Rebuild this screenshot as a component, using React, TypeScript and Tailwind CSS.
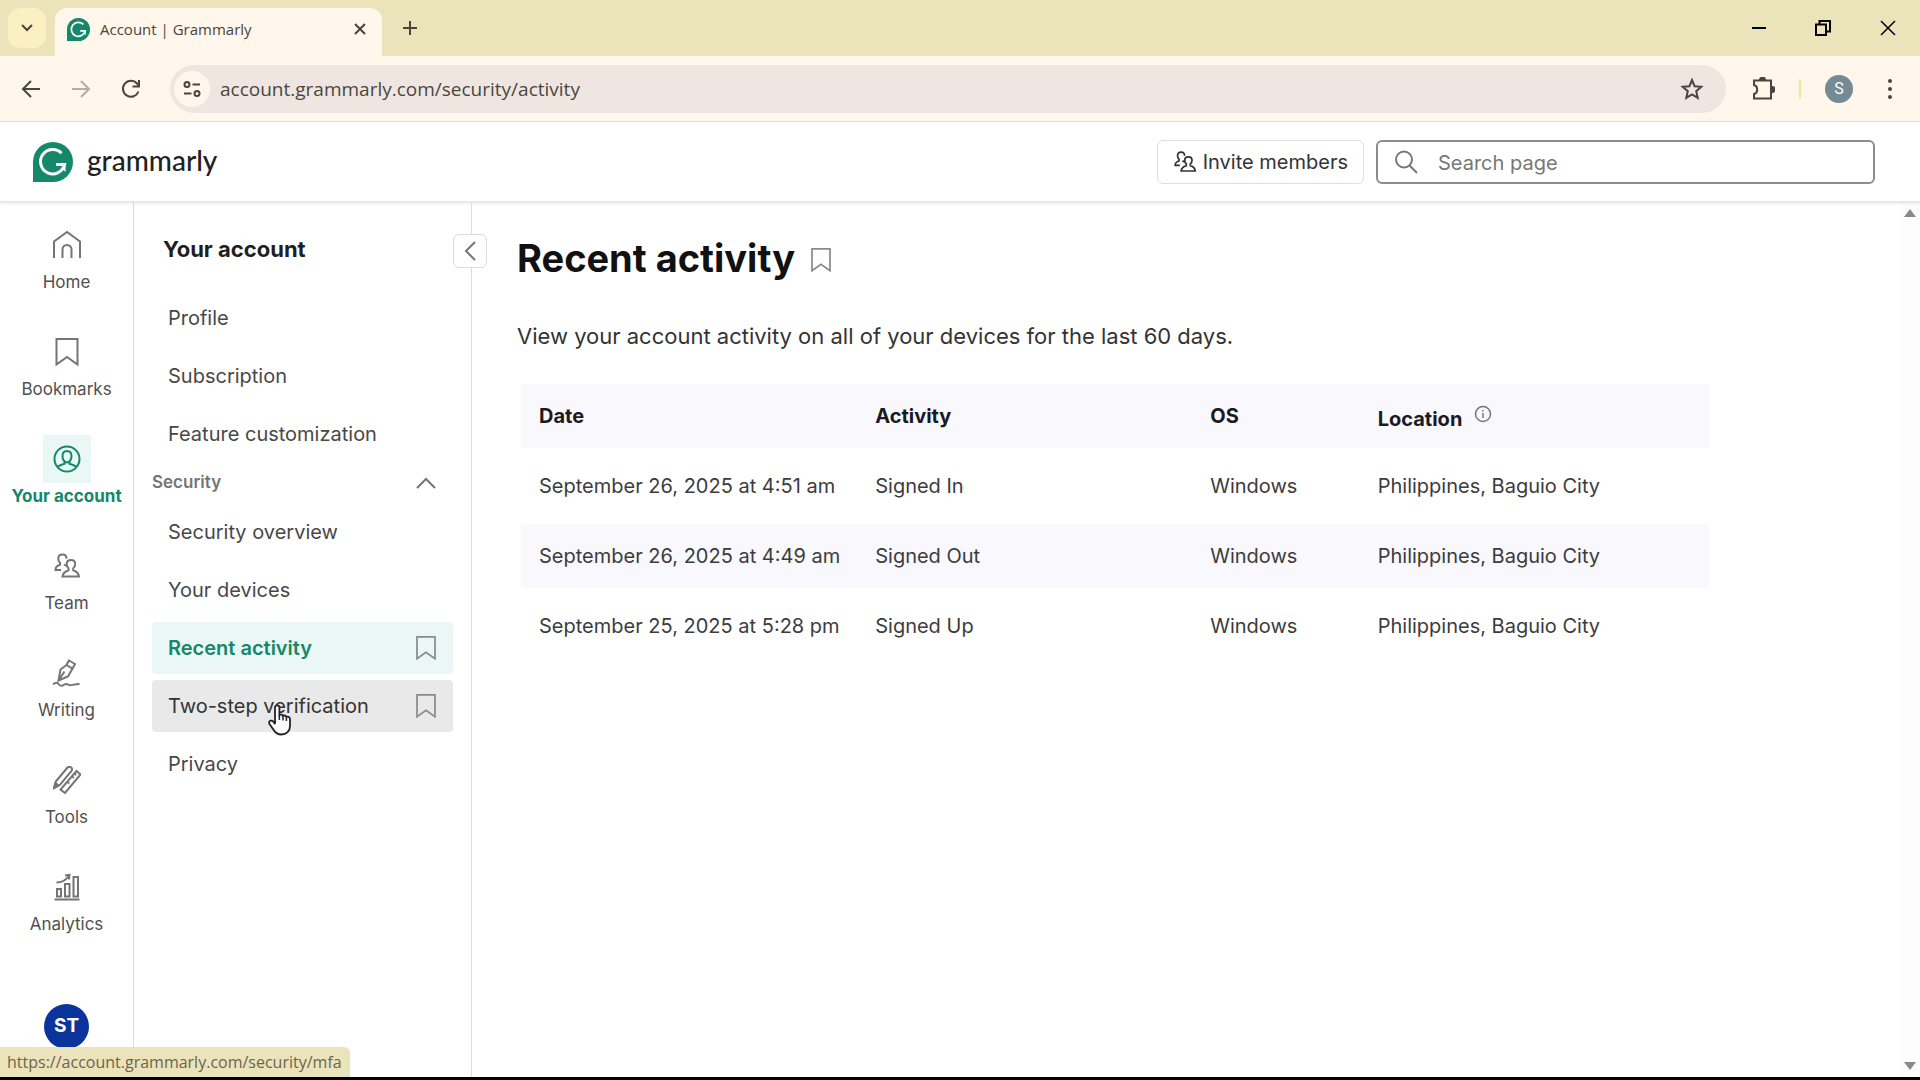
import * as React from "react";

interface IconProps {
  className?: string;
}

interface RailItem {
  id: number;
  text: string;
  icon: React.FC<IconProps>;
  active?: boolean;
}

interface MenuItem {
  id: number;
  text: string;
  state?: "active" | "hovered";
}

interface ActivityRow {
  id: number;
  date: string;
  activity: string;
  os: string;
  location: string;
}

const Svg: React.FC<{
  box?: string;
  width?: number;
  className?: string;
  children: React.ReactNode;
}> = ({ box = "0 0 28 28", width = 2, className, children }) => (
  <svg
    viewBox={box}
    fill="none"
    stroke="currentColor"
    strokeWidth={width}
    className={className}
    aria-hidden="true"
  >
    {children}
  </svg>
);

const LogoMark: React.FC<IconProps> = ({ className }) => (
  <svg viewBox="0 0 40 40" className={className} aria-hidden="true">
    <path d="M20 0a20 20 0 0 1 0 40H0V20A20 20 0 0 1 20 0z" fill="#15876a" />
    <path
      d="M28.500 11.200A12.200 12.200 0 1 0 31.600 22.400H23"
      fill="none"
      stroke="#fff"
      strokeWidth="3"
    />
    <path d="M32.500 21v9l-3.500-3.500z" fill="#fff" />
  </svg>
);

const HomeIcon: React.FC<IconProps> = ({ className }) => (
  <Svg className={className}>
    <path d="M1 27V10.500L14 1l13 9.500V27M9.500 27v-8.500a4.500 4.500 0 0 1 9 0V27" />
  </Svg>
);

const BookmarkIcon: React.FC<IconProps> = ({ className }) => (
  <Svg className={className}>
    <path d="M3.500 1h21v25.500L14 19 3.500 26.500z" />
  </Svg>
);

const AccountIcon: React.FC<IconProps> = ({ className }) => (
  <Svg className={className}>
    <circle cx="14" cy="14" r="12.5" />
    <path d="M14 6c3 0 4.500 2.200 4.500 5.200 0 3.500-2 6.300-4.500 6.300s-4.500-2.800-4.500-6.300C9.500 8.200 11 6 14 6z" />
    <path d="M4.500 22c1.500-1.800 4-2.300 7-3.300v-2M23.500 22c-1.500-1.800-4-2.300-7-3.300v-2" />
  </Svg>
);

const TeamIcon: React.FC<IconProps> = ({ className }) => (
  <Svg className={className}>
    <path d="M8 18H2.500c0-3.500 2-4.500 4.500-5.200v-2C5.800 9.800 5.300 8.500 5.300 6.800 5.300 4.300 7 2.500 9.500 2.500s4 1.800 4 4.300" />
    <path d="M18 8c2.700 0 4.200 1.700 4.200 4 0 1.800-.7 3.200-2 4.200v2c3 1 5.300 2 5.800 6.300H9.500c.5-4.300 3-5.300 6-6.300v-2c-1.200-1-1.800-2.400-1.800-4.200 0-2.300 1.600-4 4.300-4z" />
    <path d="M11 12.500l2.500 1.500" />
  </Svg>
);

const WritingIcon: React.FC<IconProps> = ({ className }) => (
  <Svg className={className}>
    <path d="M17 1.500l6 3.500-2.500 4.500-6-3.500zM14.500 6L8.500 10.500 6.500 21.500l9.500-4 4.500-8M6.500 21.500l6-9" />
    <path d="M1 25.500c3-2.500 4.500-2 6 0s3.500 1.500 5.500 0 4 .8 6 .8 3.500-1.300 9-1.300" />
  </Svg>
);

const ToolsIcon: React.FC<IconProps> = ({ className }) => (
  <Svg className={className}>
    <path d="M1 22l1.800-6.500L14.500 1.500c1-1.200 2.300-1 3.500-.2s1.500 2.200.5 3.500L7 18.800z" />
    <path d="M1 22l1.500-5 3 2.500z" fill="currentColor" />
    <path d="M23.500 5l4 3.500L12 27l-4.500-3.500z" />
    <path d="M19 10.500l1.800 1.500M14.500 16l1.800 1.500M21.500 7.500l1.800 1.500" />
  </Svg>
);

const AnalyticsIcon: React.FC<IconProps> = ({ className }) => (
  <Svg className={className}>
    <path d="M1.500 26.500h25M4 16h4v7.500H4zM12 11h4.500v12.500H12zM20.500 4H25v19.500h-4.500z" />
    <path d="M3.500 9.500c5 0 9-2 12-6M12 2.500l4.500-.5-.5 4.500" />
  </Svg>
);

const railItems: RailItem[] = [
  { id: 1, text: "Home", icon: HomeIcon },
  { id: 2, text: "Bookmarks", icon: BookmarkIcon },
  { id: 3, text: "Your account", icon: AccountIcon, active: true },
  { id: 4, text: "Team", icon: TeamIcon },
  { id: 5, text: "Writing", icon: WritingIcon },
  { id: 6, text: "Tools", icon: ToolsIcon },
  { id: 7, text: "Analytics", icon: AnalyticsIcon },
];

const accountMenu: MenuItem[] = [
  { id: 1, text: "Profile" },
  { id: 2, text: "Subscription" },
  { id: 3, text: "Feature customization" },
];

const securityMenu: MenuItem[] = [
  { id: 1, text: "Security overview" },
  { id: 2, text: "Your devices" },
  { id: 3, text: "Recent activity", state: "active" },
  { id: 4, text: "Two-step verification", state: "hovered" },
  { id: 5, text: "Privacy" },
];

const activityRows: ActivityRow[] = [
  {
    id: 1,
    date: "September 26, 2025 at 4:51 am",
    activity: "Signed In",
    os: "Windows",
    location: "Philippines, Baguio City",
  },
  {
    id: 2,
    date: "September 26, 2025 at 4:49 am",
    activity: "Signed Out",
    os: "Windows",
    location: "Philippines, Baguio City",
  },
  {
    id: 3,
    date: "September 25, 2025 at 5:28 pm",
    activity: "Signed Up",
    os: "Windows",
    location: "Philippines, Baguio City",
  },
];

const TabStrip = () => {
  return (
    <div className="flex h-14 items-end bg-[#ebe3ba] text-[#4a4536]">
      <button
        aria-label="Search tabs"
        className="mb-2 ml-2 flex h-10 w-[38px] items-center justify-center rounded-xl bg-[#fbf0c2]"
      >
        <Svg box="0 0 12 8" className="h-2 w-3">
          <path d="M1 1l5 5 5-5" />
        </Svg>
      </button>
      <div className="ml-[9px] flex h-12 w-[327px] items-center rounded-t-xl bg-[#fff7ec] px-3 pb-1.5">
        <LogoMark className="h-[23px] w-[23px]" />
        <span className="ml-2.5 flex-1 text-[15px]">Account | Grammarly</span>
        <button aria-label="Close tab" className="p-1">
          <Svg box="0 0 12 12" className="h-3 w-3">
            <path d="M1 1l10 10M11 1L1 11" />
          </Svg>
        </button>
      </div>
      <button aria-label="New tab" className="mb-4 ml-4 p-1">
        <Svg box="0 0 16 16" className="h-4 w-4">
          <path d="M8 1v14M1 8h14" />
        </Svg>
      </button>
      <div className="mb-5 ml-auto mr-6 flex items-center gap-[49px] text-black">
        <button aria-label="Minimize">
          <Svg box="0 0 14 14" className="h-3.5 w-3.5">
            <path d="M0 7h14" />
          </Svg>
        </button>
        <button aria-label="Restore">
          <Svg box="0 0 16 16" className="h-4 w-4">
            <path d="M1 4.500h10V15H1zM4.500 4V1H15v10.500h-3.500" />
          </Svg>
        </button>
        <button aria-label="Close">
          <Svg box="0 0 16 16" width={1.5} className="h-4 w-4">
            <path d="M1 1l14 14M15 1L1 15" />
          </Svg>
        </button>
      </div>
    </div>
  );
};

const Toolbar = () => {
  return (
    <div className="flex h-[66px] items-center border-b border-[#e6e0dc] bg-[#fff7ec] text-[#4a463f]">
      <button aria-label="Back" className="ml-[21px]">
        <Svg box="0 0 20 20" className="h-5 w-5">
          <path d="M19 10H2M10 2l-8 8 8 8" />
        </Svg>
      </button>
      <button aria-label="Forward" className="ml-[30px] text-[#b3ada3]">
        <Svg box="0 0 20 20" className="h-5 w-5">
          <path d="M1 10h17M10 2l8 8-8 8" />
        </Svg>
      </button>
      <button aria-label="Reload" className="ml-[30px]">
        <Svg box="0 0 20 20" className="h-5 w-5">
          <path d="M17.500 12.500A8 8 0 1 1 16 4.500l2 2.500M18 1v6.500h-6.500" />
        </Svg>
      </button>
      <div className="ml-[29px] flex h-12 flex-1 items-center rounded-full bg-[#efe6e2] pl-1 pr-[22px]">
        <button
          aria-label="View site information"
          className="flex h-9 w-9 items-center justify-center rounded-full bg-[#fff7ec]"
        >
          <Svg box="0 0 18 18" className="h-[18px] w-[18px]">
            <circle cx="4" cy="4.500" r="2.500" />
            <circle cx="14" cy="13.500" r="2.500" />
            <path d="M9.500 4.500H17M1 13.500h7.500" />
          </Svg>
        </button>
        <input
          aria-label="Address and search bar"
          defaultValue="account.grammarly.com/security/activity"
          className="ml-2.5 flex-1 bg-transparent text-[19px] leading-7 outline-none"
        />
        <button aria-label="Bookmark this tab">
          <Svg box="0 0 24 24" className="h-6 w-6">
            <path d="M12 3l2.600 6.200 6.700.6-5.100 4.400 1.500 6.600L12 17.300l-5.700 3.500 1.500-6.600-5.100-4.400 6.700-.6z" />
          </Svg>
        </button>
      </div>
      <button aria-label="Extensions" className="ml-[25px]">
        <Svg box="0 0 24 24" className="h-6 w-6">
          <path d="M3 3.500h17v18H3V17c2.200-.5 3.200-2.200 3.200-4.500S5.200 8.500 3 8z" />
          <path
            d="M9 3a2.500 2.500 0 0 1 5 0zM21 10a2.500 2.500 0 0 1 0 5z"
            fill="currentColor"
          />
        </Svg>
      </button>
      <div className="ml-6 h-5 w-0.5 bg-[#f3e795]" />
      <button
        aria-label="Profile"
        className="ml-6 flex h-7 w-7 items-center justify-center rounded-full bg-[#748a94] font-[Roboto] text-base text-white"
      >
        S
      </button>
      <button aria-label="Menu" className="ml-[25px] mr-[18px]">
        <svg viewBox="0 0 24 24" fill="currentColor" className="h-6 w-6">
          <circle cx="12" cy="4" r="2" />
          <circle cx="12" cy="12" r="2" />
          <circle cx="12" cy="20" r="2" />
        </svg>
      </button>
    </div>
  );
};

const Header = () => {
  return (
    <header className="relative flex h-20 items-center border-b border-[#e6e6e6] bg-white pl-[33px] pr-[45px] shadow-[0_1px_3px_rgba(0,0,0,0.12)]">
      <a href="#" className="flex items-center gap-3.5">
        <LogoMark className="h-10 w-10" />
        <span className="pb-1 font-[Lato] text-[28px] leading-9 font-medium text-[#222]">
          grammarly
        </span>
      </a>
      <button className="ml-auto flex h-11 items-center gap-1.5 rounded-md border border-[#dedede] px-[15px] text-xl text-[#333]">
        <TeamIcon className="h-6 w-6" />
        Invite members
      </button>
      <label className="ml-3 flex h-11 w-[499px] items-center rounded-md border-2 border-[#8c8c8c] pl-4 text-[#777]">
        <Svg box="0 0 24 24" className="h-6 w-6">
          <circle cx="10" cy="9.500" r="8" />
          <path d="M15.500 15.500l7.500 7.500" />
        </Svg>
        <input
          type="text"
          aria-label="Search page"
          placeholder="Search page"
          className="ml-5 min-w-0 flex-1 pt-0.5 text-xl outline-none placeholder:text-[#777]"
        />
      </label>
    </header>
  );
};

const Rail = () => {
  return (
    <nav className="flex w-[134px] shrink-0 flex-col items-center gap-9 border-r border-[#dcdcdc] pt-[19px]">
      {railItems.map((item) => (
        <a
          href="#"
          key={item.id}
          className={`flex flex-col items-center gap-[3px] ${
            item.active ? "font-bold text-[#15876a]" : "text-[#505050]"
          }`}
        >
          <span
            className={`flex h-12 w-12 items-center justify-center ${
              item.active ? "bg-[#eaf8f5]" : "text-[#757575]"
            }`}
          >
            <item.icon className="h-7 w-7" />
          </span>
          <span className="text-[17px] leading-5">{item.text}</span>
        </a>
      ))}
      <button className="mt-auto mb-7 flex h-[45px] w-[45px] items-center justify-center rounded-full bg-[#0b339c] text-[19px] font-bold text-white">
        ST
      </button>
    </nav>
  );
};

const MenuList: React.FC<{ items: MenuItem[] }> = ({ items }) => {
  return (
    <ul className="flex flex-col gap-1.5">
      {items.map((item) => (
        <li
          key={item.id}
          className={`flex h-[52px] items-center justify-between rounded-sm pl-4 pr-[15px] ${
            item.state === "active"
              ? "bg-[#ebf7f4] font-semibold text-[#15876a]"
              : item.state === "hovered"
              ? "bg-[#e9e9e9] text-[#333]"
              : "text-[#484848]"
          }`}
        >
          <a href="#" className="text-xl leading-7">
            {item.text}
          </a>
          {item.state && (
            <button aria-label="Bookmark page" className="text-[#8a8a8a]">
              <BookmarkIcon className="h-6 w-6" />
            </button>
          )}
        </li>
      ))}
    </ul>
  );
};

const SideMenu = () => {
  return (
    <aside className="relative w-[338px] shrink-0 border-r border-[#dcdcdc] px-[18px] pt-[33px]">
      <h2 className="mb-[29px] pl-[11px] text-[22px] leading-7 font-bold text-[#1f1f1f]">
        Your account
      </h2>
      <MenuList items={accountMenu} />
      <button className="flex h-[46px] w-full items-center justify-between pr-[17px] text-[17px] font-semibold text-[#757575]">
        Security
        <Svg box="0 0 20 12" className="h-3 w-5">
          <path d="M1 11l9-9 9 9" />
        </Svg>
      </button>
      <MenuList items={securityMenu} />
      {/**
       * Collapse toggle on the divider
       */}
      <button
        aria-label="Collapse menu"
        className="absolute -right-4 top-8 flex h-[34px] w-[34px] items-center justify-center rounded-md border border-[#dcdcdc] bg-white text-[#757575]"
      >
        <Svg box="0 0 12 20" className="h-5 w-3">
          <path d="M11 1l-9 9 9 9" />
        </Svg>
      </button>
      {/**
       * Pointer
       */}
      <svg
        viewBox="0 0 24 32"
        className="pointer-events-none absolute left-[134px] top-[502px] h-8 w-6"
        aria-hidden="true"
      >
        <path
          d="M7 20V3.500a2.200 2.200 0 0 1 4.400 0V11c1.500-.8 3-.5 3.600.8 1.500-.6 2.800-.2 3.400 1 1.800-.5 3.600.4 3.600 2.700V22c0 5-3.500 8.500-8.500 8.500-4 0-6-1.500-7.800-4.500L1.500 20c-.8-1.500-.3-2.800 1-3.300 1.500-.5 3.300.8 4.500 3.300z"
          fill="#fff"
          stroke="#222"
          strokeWidth="1.800"
        />
        <path
          d="M11.400 11v5M15 12v4.500M18.400 13v4"
          stroke="#222"
          strokeWidth="1.500"
        />
      </svg>
    </aside>
  );
};

const ActivityTable = () => {
  return (
    <table className="ml-1 w-full max-w-[1188px] table-fixed border-separate border-spacing-x-0 border-spacing-y-[6px] text-left text-xl leading-7 text-[#3c3c3c]">
      <thead>
        <tr className="h-16 bg-[#f8f8fd] text-[#1a1a1f]">
          <th className="w-[28.3%] pl-[18px] font-bold">Date</th>
          <th className="w-[28.2%] pl-[18px] font-bold">Activity</th>
          <th className="w-[14.1%] pl-[18px] font-bold">OS</th>
          <th className="pl-[18px] pt-1.5 font-bold">
            <span className="flex items-start gap-3">
              Location
              <Svg
                box="0 0 18 18"
                width={1.5}
                className="h-[18px] w-[18px] text-[#777]"
              >
                <circle cx="9" cy="9" r="7.500" />
                <path d="M9 8v5M9 5v1.500" />
              </Svg>
            </span>
          </th>
        </tr>
      </thead>
      <tbody>
        {activityRows.map((row) => (
          <tr key={row.id} className="h-16 even:bg-[#f8f8fd]">
            <td className="pl-[18px]">{row.date}</td>
            <td className="pl-[18px]">{row.activity}</td>
            <td className="pl-[18px]">{row.os}</td>
            <td className="pl-[18px]">{row.location}</td>
          </tr>
        ))}
      </tbody>
    </table>
  );
};

const App = () => {
  return (
    <div className="relative flex min-h-screen flex-col border-b-[3px] border-black bg-white font-[Inter,sans-serif]">
      <div className="font-['Open_Sans','Noto_Sans',sans-serif]">
        <TabStrip />
        <Toolbar />
      </div>
      <Header />
      <div className="flex flex-1">
        <Rail />
        <SideMenu />
        <main className="flex-1 pl-[45px] pt-8">
          <div className="mb-[38px] flex items-center gap-3.5">
            <h1 className="text-[38px] leading-[48px] font-bold text-[#111]">
              Recent activity
            </h1>
            <button
              aria-label="Bookmark page"
              className="pt-1 text-[#8a8a8a]"
            >
              <BookmarkIcon className="h-6 w-6" />
            </button>
          </div>
          <p className="mb-[26px] text-[22px] leading-8 text-[#333]">
            View your account activity on all of your devices for the last 60
            days.
          </p>
          <ActivityTable />
        </main>
        {/**
         * Scrollbar
         */}
        <div className="flex w-5 flex-col items-center justify-between bg-[#fcfcfc] py-[7px] text-[#888]">
          <svg viewBox="0 0 12 8" fill="currentColor" className="h-2 w-3">
            <path d="M6 0l6 8H0z" />
          </svg>
          <svg viewBox="0 0 12 8" fill="currentColor" className="h-2 w-3">
            <path d="M6 8L0 0h12z" />
          </svg>
        </div>
      </div>
      <div className="absolute bottom-0 left-0 flex h-[30px] items-center rounded-tr-md bg-[#ebe3ba] pl-[7px] pr-2 font-['Open_Sans','Noto_Sans',sans-serif] text-base text-[#6b654e]">
        https://account.grammarly.com/security/mfa
      </div>
    </div>
  );
};

export default App;
